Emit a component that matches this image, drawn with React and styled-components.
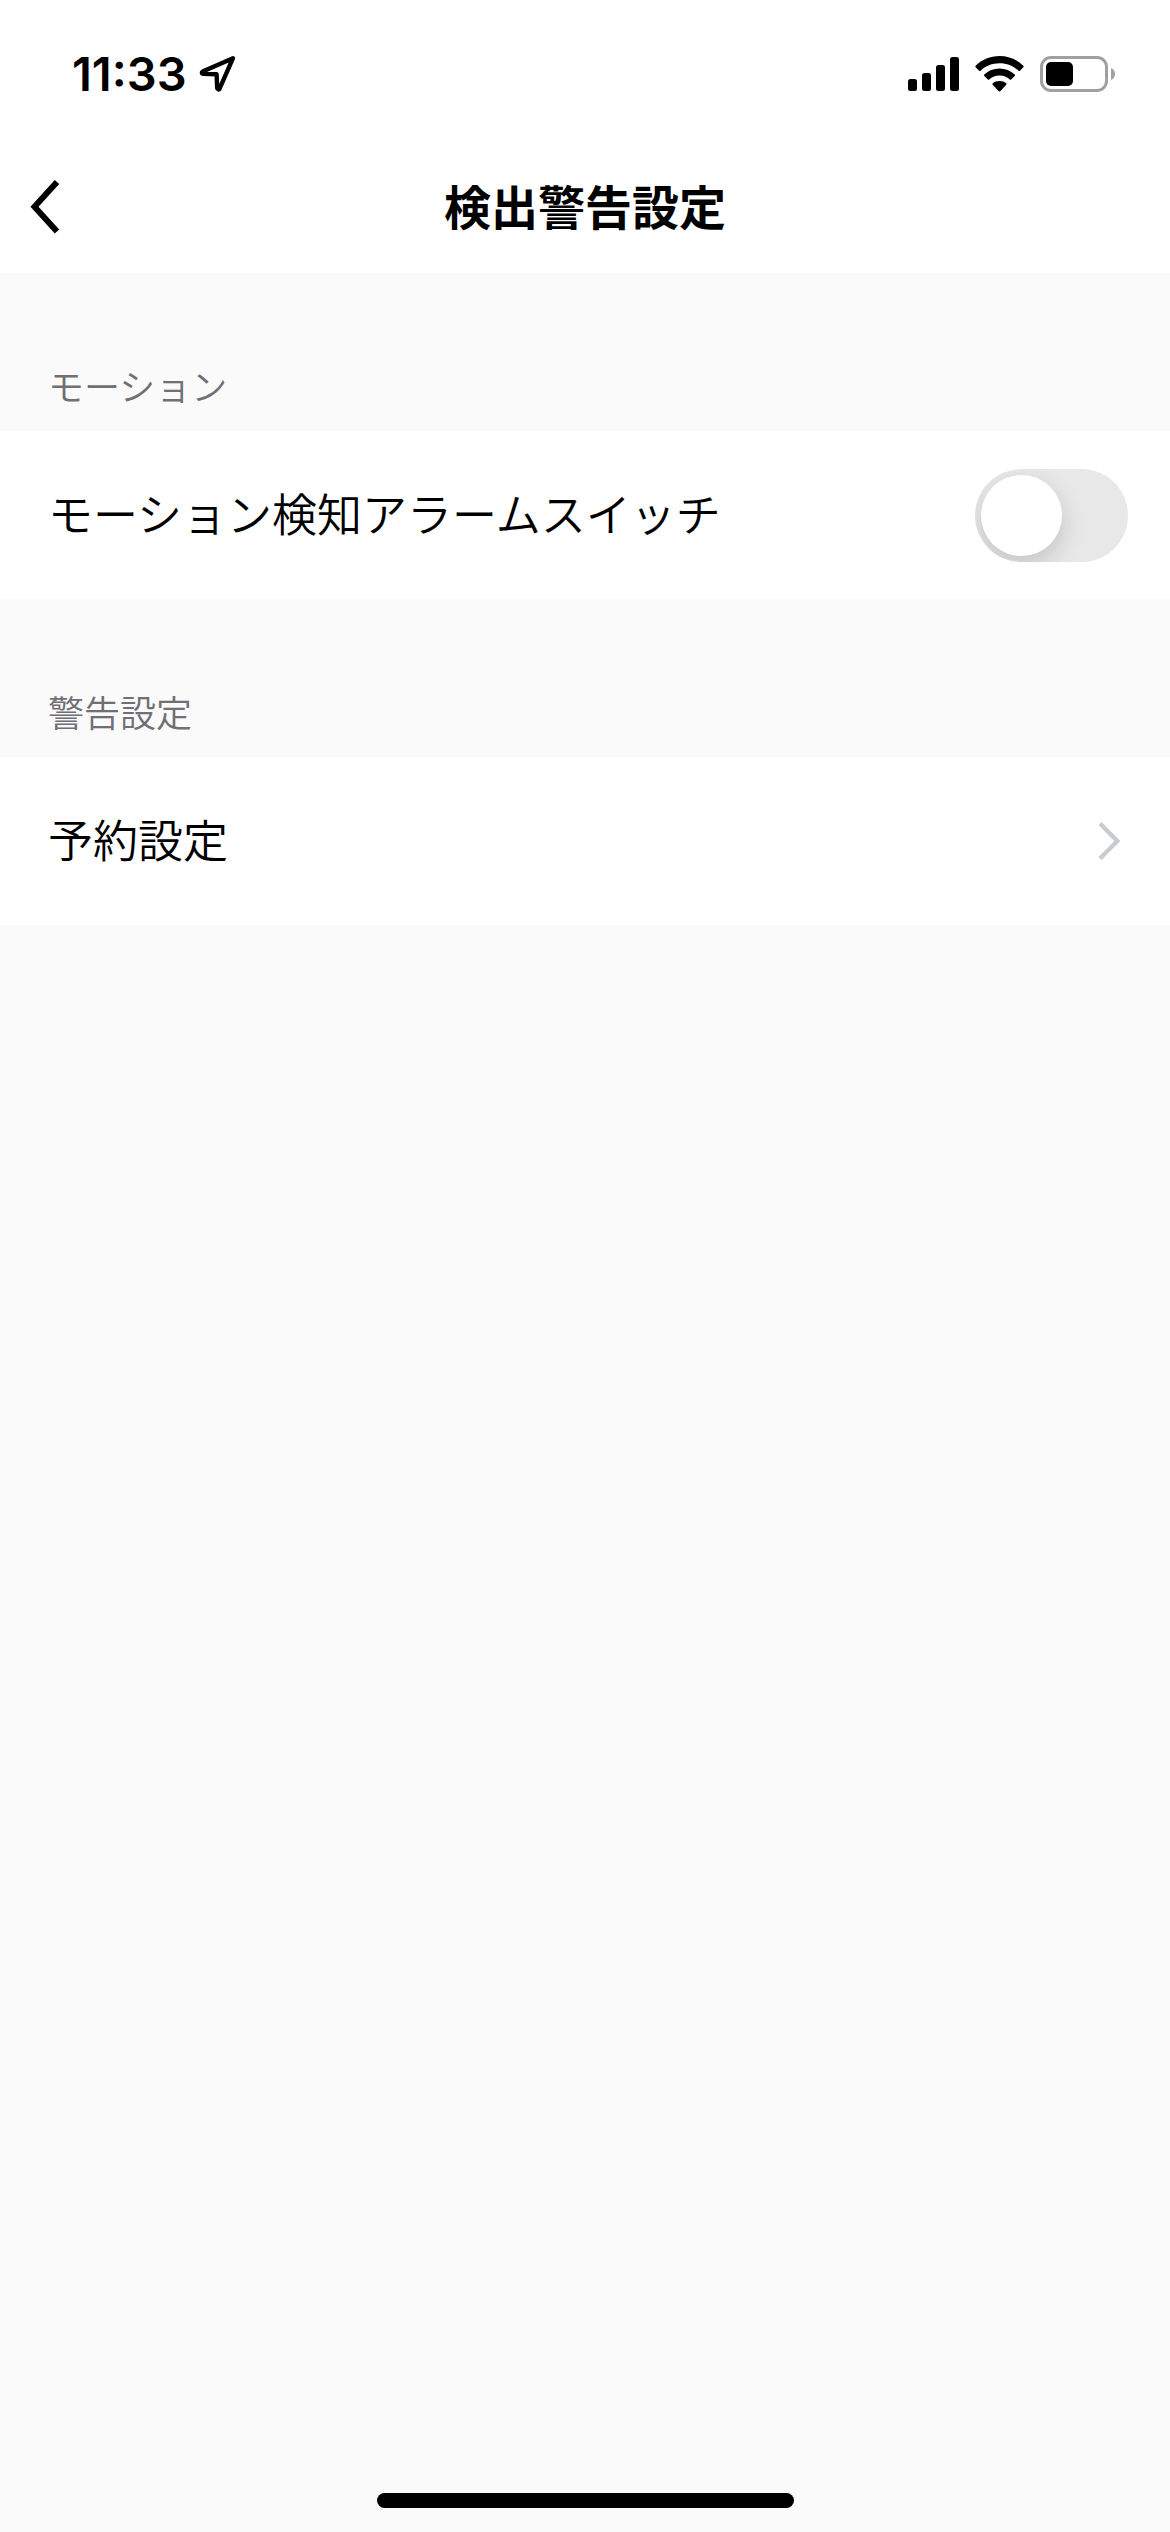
import React, { useState, useCallback } from 'react';

import styled, { createGlobalStyle, css } from 'styled-components';

const palette = {
    black: '#000000',
    white: '#ffffff',
    page: '#fafafa',
    label: '#6f6f74',
    track: '#e8e8e8',
    active: '#34c759',
    arrow: '#c6ccd1',
    battery: '#a0a0a0'
};

const GlobalStyle = createGlobalStyle`
    body {
        margin: 0;
        background: ${palette.page};
        color: ${palette.black};
        font-family: 'Noto Sans CJK JP', sans-serif;
    }

    * {
        box-sizing: border-box;
    }
`;

const Page = styled.div`
    display: flex;
    flex-direction: column;
    min-height: 100vh;
`;

const StatusBar = styled.div`
    display: flex;
    align-items: center;
    justify-content: space-between;
    height: 141px;
    padding: 7px 54px 0 72px;
    background: ${palette.white};
`;

const StatusGroup = styled.div`
    display: flex;
    align-items: center;
    gap: ${({ $gap }) => $gap}px;

    & svg {
        display: block;
    }
`;

const Time = styled.time`
    font-family: Inter, sans-serif;
    font-size: 47px;
    font-weight: 600;
    line-height: 56px;
`;

const NavBar = styled.header`
    display: grid;
    grid-template-columns: 90px 1fr 90px;
    align-items: center;
    height: 132px;
    background: ${palette.white};
`;

const BackButton = styled.button`
    display: flex;
    align-items: center;
    height: 132px;
    padding: 0 0 0 28px;
    border: none;
    background: none;
    cursor: pointer;
`;

const Title = styled.h1`
    margin: 0;
    padding-bottom: 4px;
    font-size: 47px;
    font-weight: 700;
    line-height: 72px;
    text-align: center;
`;

const Main = styled.main`
    flex: 1;
`;

const SectionTitle = styled.h2`
    margin: 0;
    padding: 85px 48px 19px;
    color: ${palette.label};
    font-size: 36px;
    font-weight: 350;
    line-height: 54px;
`;

const rowStyle = css`
    display: flex;
    align-items: center;
    justify-content: space-between;
    width: 100%;
    height: 168px;
    padding: 0 42px 0 48px;
    border: none;
    background: ${palette.white};
    color: ${palette.black};
    font-family: inherit;
    font-size: 45px;
    font-weight: 350;
    line-height: 66px;
    text-align: left;
    cursor: pointer;
`;

const SwitchRow = styled.label`
    ${rowStyle}
`;

const LinkRow = styled.button`
    ${rowStyle}
`;

const RowText = styled.span`
    padding-bottom: 4px;
`;

const Switch = styled.input`
    appearance: none;
    flex: none;
    width: 153px;
    height: 93px;
    margin: 0;
    padding: 6px;
    border-radius: 47px;
    background: ${palette.track};
    overflow: hidden;
    cursor: pointer;

    &::before {
        content: '';
        display: block;
        width: 81px;
        height: 81px;
        border-radius: 50%;
        background: ${palette.white};
        box-shadow: 0 9px 24px rgba(0, 0, 0, 0.16);
    }

    &:checked {
        background: ${palette.active};
    }

    &:checked::before {
        margin-left: auto;
    }
`;

const Footer = styled.footer`
    display: flex;
    justify-content: center;
    padding-bottom: 24px;
`;

const HomeIndicator = styled.div`
    width: 417px;
    height: 15px;
    border-radius: 8px;
    background: ${palette.black};
`;

const LocationIcon = () => (
    <svg width="38" height="38" viewBox="0 0 38 38" fill="none" aria-hidden="true">
        <path
            d="M34 3.2 3.6 16.6C2.4 17.2 2.7 18.8 4 18.9L17.6 19.3 18.2 33.2C18.3 34.6 20 34.9 20.6 33.7Z"
            stroke="#000"
            strokeWidth="4.4"
            strokeLinejoin="round"
        />
    </svg>
);

const SignalIcon = () => (
    <svg width="51" height="34" viewBox="0 0 51 34" aria-hidden="true">
        <rect x="0" y="22" width="9" height="12" rx="2.5" />
        <rect x="14" y="16" width="9" height="18" rx="2.5" />
        <rect x="28" y="8" width="9" height="26" rx="2.5" />
        <rect x="42" y="0" width="9" height="34" rx="2.5" />
    </svg>
);

const WifiIcon = () => (
    <svg width="49" height="36" viewBox="0 0 49 36" aria-hidden="true">
        <path d="M24.5 0C33.7 0 42.1 3.6 48.3 9.7Q49 10.4 48.3 11.2L44.9 14.7Q44.2 15.4 43.5 14.7C38.5 9.9 31.8 7.2 24.5 7.2S10.5 9.9 5.5 14.7Q4.8 15.4 4.1 14.7L.7 11.2Q0 10.4 .7 9.7C6.9 3.6 15.3 0 24.5 0Z" />
        <path d="M24.5 12.5C30.4 12.5 35.7 14.8 39.7 18.5Q40.4 19.2 39.7 19.9L36.2 23.4Q35.5 24.1 34.8 23.4C32 21 28.4 19.6 24.5 19.6S17 21 14.2 23.4Q13.5 24.1 12.8 23.4L9.3 19.9Q8.6 19.2 9.3 18.5C13.3 14.8 18.6 12.5 24.5 12.5Z" />
        <path d="M24.5 25C27.2 25 29.5 25.9 31.2 27.3Q32 28 31.3 28.7L25.2 35.2Q24.5 35.9 23.8 35.2L17.7 28.7Q17 28 17.8 27.3C19.5 25.9 21.8 25 24.5 25Z" />
    </svg>
);

const BatteryIcon = () => (
    <svg width="76" height="36" viewBox="0 0 76 36" aria-hidden="true">
        <rect
            x="1.5"
            y="1.5"
            width="65"
            height="33"
            rx="9.5"
            fill="none"
            stroke={palette.battery}
            strokeWidth="3"
        />
        <rect x="6" y="6" width="27" height="24" rx="5" />
        <path d="M71 12C73.5 13 75 15.3 75 18S73.5 23 71 24Z" fill={palette.battery} />
    </svg>
);

const BackIcon = () => (
    <svg width="36" height="60" viewBox="0 0 36 60" fill="none" aria-hidden="true">
        <path d="M29 5 6.5 29.7 29 54.5" stroke="#000" strokeWidth="6" />
    </svg>
);

const ArrowIcon = () => (
    <svg width="30" height="42" viewBox="0 0 30 42" fill="none" aria-hidden="true">
        <path d="M2 3.5 19.3 21 2 38.5" stroke={palette.arrow} strokeWidth="4.4" />
    </svg>
);

const App = () => {
    const [motion, setMotion] = useState(false);

    const onChangeMotion = useCallback(
        e => {
            setMotion(e.target.checked);
        },
        [setMotion]
    );

    return (
        <Page lang="ja">
            <GlobalStyle />
            <StatusBar>
                <StatusGroup $gap={12}>
                    <Time>11:33</Time>
                    <LocationIcon />
                </StatusGroup>
                <StatusGroup $gap={16}>
                    <SignalIcon />
                    <WifiIcon />
                    <BatteryIcon />
                </StatusGroup>
            </StatusBar>
            <NavBar>
                <BackButton type="button" aria-label="戻る">
                    <BackIcon />
                </BackButton>
                <Title>検出警告設定</Title>
            </NavBar>
            <Main>
                <section>
                    <SectionTitle>モーション</SectionTitle>
                    <SwitchRow htmlFor="motion">
                        <RowText>モーション検知アラームスイッチ</RowText>
                        <Switch
                            id="motion"
                            type="checkbox"
                            role="switch"
                            checked={motion}
                            onChange={onChangeMotion}
                        />
                    </SwitchRow>
                </section>
                <section>
                    <SectionTitle>警告設定</SectionTitle>
                    <LinkRow type="button">
                        <RowText>予約設定</RowText>
                        <ArrowIcon />
                    </LinkRow>
                </section>
            </Main>
            <Footer>
                <HomeIndicator />
            </Footer>
        </Page>
    );
};

export default App;
